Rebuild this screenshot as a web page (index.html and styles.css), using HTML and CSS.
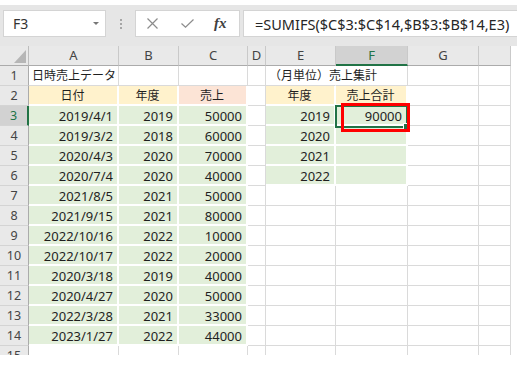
FILE: index.html
```html
<!DOCTYPE html>
<html lang="ja">
<head>
    <meta charset="UTF-8">
    <meta name="viewport" content="width=device-width, initial-scale=1.0">
    <title>SUMIFS 売上集計</title>
    <link rel="stylesheet" href="styles.css">
</head>
<body>
    <div class="toolbar">
        <div class="namebox">
            <span class="cellref">F3</span>
            <span class="drop"></span>
        </div>
        <div class="grip"><i></i><i></i><i></i></div>
        <div class="fxbox">
            <svg class="ico" width="11" height="11" viewBox="0 0 11 11"><path d="M0.5 0.5L10.5 10.5M10.5 0.5L0.5 10.5"/></svg>
            <svg class="ico" width="13" height="9" viewBox="0 0 13 9"><path d="M0.5 4.5L4.5 8.2L12.5 0.5"/></svg>
            <span class="fx">fx</span>
        </div>
        <div class="formula">=SUMIFS($C$3:$C$14,$B$3:$B$14,E3)</div>
    </div>

    <div class="sheet">
        <div class="grid">
            <!-- column headers -->
            <div class="corner"><span class="tri"></span></div>
            <div class="ch">A</div>
            <div class="ch">B</div>
            <div class="ch">C</div>
            <div class="ch">D</div>
            <div class="ch">E</div>
            <div class="ch on">F</div>
            <div class="ch">G</div>
            <div class="ch"></div>

            <!-- 1 -->
            <div class="rh">1</div>
            <div class="cell ja">日時売上データ</div>
            <div class="cell"></div>
            <div class="cell"></div>
            <div class="cell"></div>
            <div class="cell ja spill">（月単位）売上集計</div>
            <div class="cell"></div>
            <div class="cell"></div>
            <div class="cell"></div>

            <!-- 2 -->
            <div class="rh">2</div>
            <div class="cell ja mid gold">日付</div>
            <div class="cell ja mid gold">年度</div>
            <div class="cell ja mid rose">売上</div>
            <div class="cell"></div>
            <div class="cell ja mid gold">年度</div>
            <div class="cell ja mid gold">売上合計</div>
            <div class="cell"></div>
            <div class="cell"></div>

            <!-- 3 -->
            <div class="rh on">3</div>
            <div class="cell num green">2019/4/1</div>
            <div class="cell num green">2019</div>
            <div class="cell num green">50000</div>
            <div class="cell"></div>
            <div class="cell num green">2019</div>
            <div class="cell num green">90000</div>
            <div class="cell"></div>
            <div class="cell"></div>

            <!-- 4 -->
            <div class="rh">4</div>
            <div class="cell num green">2019/3/2</div>
            <div class="cell num green">2018</div>
            <div class="cell num green">60000</div>
            <div class="cell"></div>
            <div class="cell num green">2020</div>
            <div class="cell num green"></div>
            <div class="cell"></div>
            <div class="cell"></div>

            <!-- 5 -->
            <div class="rh">5</div>
            <div class="cell num green">2020/4/3</div>
            <div class="cell num green">2020</div>
            <div class="cell num green">70000</div>
            <div class="cell"></div>
            <div class="cell num green">2021</div>
            <div class="cell num green"></div>
            <div class="cell"></div>
            <div class="cell"></div>

            <!-- 6 -->
            <div class="rh">6</div>
            <div class="cell num green">2020/7/4</div>
            <div class="cell num green">2020</div>
            <div class="cell num green">40000</div>
            <div class="cell"></div>
            <div class="cell num green">2022</div>
            <div class="cell num green"></div>
            <div class="cell"></div>
            <div class="cell"></div>

            <!-- 7 -->
            <div class="rh">7</div>
            <div class="cell num green">2021/8/5</div>
            <div class="cell num green">2021</div>
            <div class="cell num green">50000</div>
            <div class="cell"></div>
            <div class="cell"></div>
            <div class="cell"></div>
            <div class="cell"></div>
            <div class="cell"></div>

            <!-- 8 -->
            <div class="rh">8</div>
            <div class="cell num green">2021/9/15</div>
            <div class="cell num green">2021</div>
            <div class="cell num green">80000</div>
            <div class="cell"></div>
            <div class="cell"></div>
            <div class="cell"></div>
            <div class="cell"></div>
            <div class="cell"></div>

            <!-- 9 -->
            <div class="rh">9</div>
            <div class="cell num green">2022/10/16</div>
            <div class="cell num green">2022</div>
            <div class="cell num green">10000</div>
            <div class="cell"></div>
            <div class="cell"></div>
            <div class="cell"></div>
            <div class="cell"></div>
            <div class="cell"></div>

            <!-- 10 -->
            <div class="rh">10</div>
            <div class="cell num green">2022/10/17</div>
            <div class="cell num green">2022</div>
            <div class="cell num green">20000</div>
            <div class="cell"></div>
            <div class="cell"></div>
            <div class="cell"></div>
            <div class="cell"></div>
            <div class="cell"></div>

            <!-- 11 -->
            <div class="rh">11</div>
            <div class="cell num green">2020/3/18</div>
            <div class="cell num green">2019</div>
            <div class="cell num green">40000</div>
            <div class="cell"></div>
            <div class="cell"></div>
            <div class="cell"></div>
            <div class="cell"></div>
            <div class="cell"></div>

            <!-- 12 -->
            <div class="rh">12</div>
            <div class="cell num green">2020/4/27</div>
            <div class="cell num green">2020</div>
            <div class="cell num green">50000</div>
            <div class="cell"></div>
            <div class="cell"></div>
            <div class="cell"></div>
            <div class="cell"></div>
            <div class="cell"></div>

            <!-- 13 -->
            <div class="rh">13</div>
            <div class="cell num green">2022/3/28</div>
            <div class="cell num green">2021</div>
            <div class="cell num green">33000</div>
            <div class="cell"></div>
            <div class="cell"></div>
            <div class="cell"></div>
            <div class="cell"></div>
            <div class="cell"></div>

            <!-- 14 -->
            <div class="rh">14</div>
            <div class="cell num green">2023/1/27</div>
            <div class="cell num green">2022</div>
            <div class="cell num green">44000</div>
            <div class="cell"></div>
            <div class="cell"></div>
            <div class="cell"></div>
            <div class="cell"></div>
            <div class="cell"></div>

            <!-- 15 -->
            <div class="rh">15</div>
            <div class="cell"></div>
            <div class="cell"></div>
            <div class="cell"></div>
            <div class="cell"></div>
            <div class="cell"></div>
            <div class="cell"></div>
            <div class="cell"></div>
            <div class="cell"></div>
        </div>

        <div class="active"><span class="handle"></span></div>
        <div class="mark"></div>
    </div>
</body>
</html>
```

FILE: styles.css
```css
body {
    margin: 0;
    background-color: #fff;
    font-family: "Noto Sans", "Noto Sans CJK JP", sans-serif;
    color: #1f1f1f;
}

/* formula bar */
.toolbar {
    display: flex;
    height: 41px;
    margin-top: 5px;
    padding: 5px 0 9px 3px;
    box-sizing: border-box;
    background-color: #e6e6e6;
}

.namebox {
    display: flex;
    align-items: center;
    justify-content: space-between;
    width: 103px;
    padding: 0 6px 0 9px;
    box-sizing: border-box;
    background-color: #fff;
    border: 1px solid #d4d4d4;
}

.cellref {
    font-size: 14px;
    color: #333;
}

.drop {
    width: 0;
    height: 0;
    border-left: 3px solid transparent;
    border-right: 3px solid transparent;
    border-top: 3px solid #777;
}

.grip {
    display: flex;
    flex-direction: column;
    align-items: center;
    justify-content: center;
    gap: 2px;
    width: 29px;
}

.grip i {
    width: 2px;
    height: 2px;
    background-color: #a6a6a6;
}

.fxbox {
    display: flex;
    align-items: center;
    width: 105px;
    padding-left: 11px;
    box-sizing: border-box;
    background-color: #fff;
    border: 1px solid #d4d4d4;
}

.ico {
    fill: none;
    stroke: #8c8c8c;
    stroke-width: 1.2;
}

.ico + .ico {
    margin-left: 23px;
}

.fx {
    margin-left: 20px;
    font-family: "Liberation Serif", serif;
    font-style: italic;
    font-weight: bold;
    font-size: 15px;
    color: #404040;
}

.formula {
    flex: 1;
    display: flex;
    align-items: center;
    margin-left: 3px;
    padding-left: 11px;
    background-color: #fff;
    border: 1px solid #d4d4d4;
    border-right: none;
    font-size: 14.5px;
    color: #262626;
    white-space: nowrap;
}

/* sheet */
.sheet {
    position: relative;
    width: 511px;
    height: 309px;
    overflow: hidden;
}

.grid {
    display: grid;
    grid-template-columns: 29px 90px 60px 69px 18px 70px 72px 71px 32px;
    grid-auto-rows: 20px;
}

.grid > div {
    box-sizing: border-box;
    white-space: nowrap;
}

.corner {
    display: flex;
    align-items: flex-end;
    justify-content: flex-end;
    padding: 0 2px 2px 0;
    background-color: #e9e9e9;
    border-right: 1px solid #bdbdbd;
    border-bottom: 1px solid #ababab;
}

.tri {
    width: 12px;
    height: 13px;
    background-color: #b6b6b6;
    clip-path: polygon(100% 0, 100% 100%, 0 100%);
}

.ch {
    text-align: center;
    line-height: 19px;
    font-size: 13px;
    color: #444;
    background-color: #e9e9e9;
    border-right: 1px solid #c9c9c9;
    border-bottom: 1px solid #ababab;
}

.ch.on {
    background-color: #d2d2d2;
    color: #217346;
    border-bottom: 2px solid #217346;
}

.rh {
    text-align: center;
    line-height: 19px;
    font-size: 12.5px;
    color: #444;
    background-color: #e9e9e9;
    border-right: 1px solid #ababab;
    border-bottom: 1px solid #d4d4d4;
}

.rh.on {
    background-color: #d2d2d2;
    color: #217346;
    border-right: 2px solid #217346;
}

.cell {
    padding: 0 4px;
    line-height: 20px;
    font-size: 13px;
    border-right: 1px solid #dadada;
    border-bottom: 1px solid #dadada;
}

.cell.ja {
    font-size: 12px;
    padding-left: 3px;
}

.cell.spill {
    border-right-color: transparent;
}

.num {
    text-align: right;
}

.mid {
    text-align: center;
}

.gold,
.rose,
.green {
    border-right: 2px solid #fff;
    border-bottom: 2px solid #fff;
}

.gold {
    background-color: #fff2cc;
}

.rose {
    background-color: #fce4d6;
}

.green {
    background-color: #e2efda;
}

/* active cell F3 and the red callout */
.active {
    position: absolute;
    left: 335px;
    top: 59px;
    width: 73px;
    height: 23px;
    border: 2px solid #217346;
    box-sizing: border-box;
}

.handle {
    position: absolute;
    right: -4px;
    bottom: -4px;
    width: 5px;
    height: 5px;
    background-color: #217346;
    border: 1px solid #fff;
}

.mark {
    position: absolute;
    left: 341px;
    top: 57px;
    width: 69px;
    height: 29px;
    border: 3px solid #f00;
    box-sizing: border-box;
}
```
